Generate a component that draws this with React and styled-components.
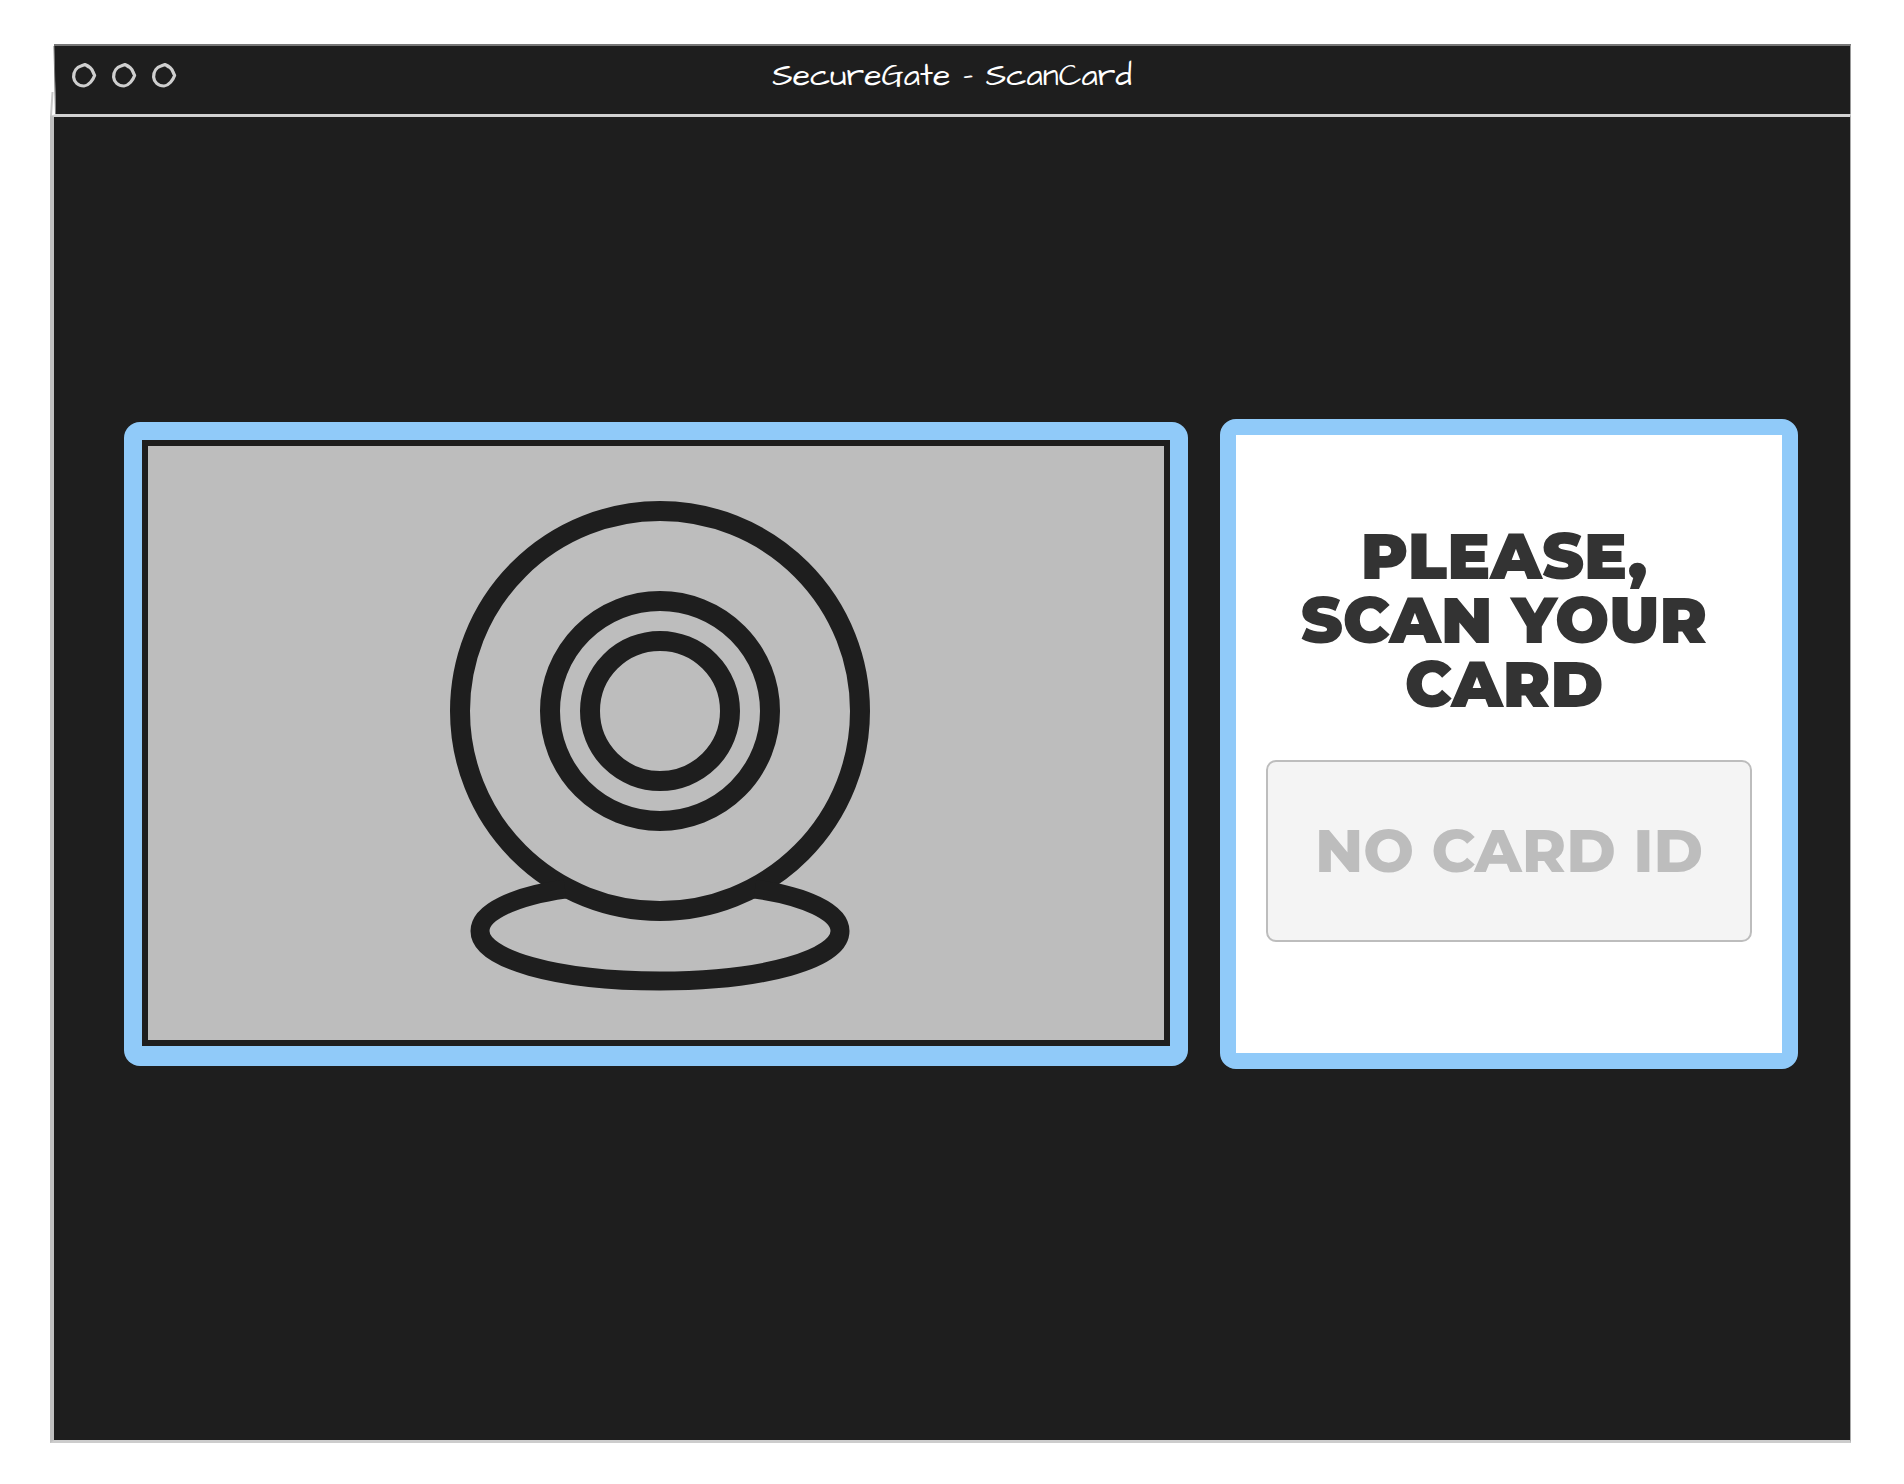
import React from "react";
import styled, { createGlobalStyle } from "styled-components";

const GlobalStyle = createGlobalStyle`
  *, *::before, *::after { box-sizing: border-box; }
  body { margin: 0; background: #fff; }
`;

const Page = styled.div`
  display: flex;
  min-height: 100vh;
  padding: 44px 53px 41px 50px;
`;

const Window = styled.main`
  flex: 1;
  display: flex;
  flex-direction: column;
  min-width: 0;
`;

const TitleBar = styled.header`
  position: relative;
  display: grid;
  grid-template-columns: 1fr auto 1fr;
  align-items: center;
  height: 70px;
  margin-left: 4px;
  padding: 0 18px 8px;
  background: #1e1e1e;
  border-top: 2px solid #777;
  border-right: 1px solid #999;
`;

const SketchEdge = styled.svg`
  position: absolute;
  left: -4px;
  top: 0;
  width: 8px;
  height: 72px;
`;

const Dots = styled.div`
  display: flex;
  gap: 16px;
`;

const Dot = styled.svg`
  width: 24px;
  height: 24px;
  overflow: visible;
  fill: none;
  stroke: #cfcfcf;
  stroke-width: 3.2;
  stroke-linejoin: round;
`;

const Title = styled.h1`
  margin: 0;
  color: #fff;
  font: 400 32px/40px "Architects Daughter", "DejaVu Sans", sans-serif;
  white-space: nowrap;
`;

const Body = styled.section`
  flex: 1;
  display: grid;
  grid-template-columns: 1064fr 578fr;
  gap: 32px;
  align-items: center;
  padding: 0 52px 70px 70px;
  background: #1e1e1e;
  border-style: solid;
  border-width: 3px 1px 3px 4px;
  border-color: #d2d2d2 #aaa #ccc #c0c0c0;
`;

const Camera = styled.figure`
  margin: 0;
  height: 644px;
  padding: 18px 18px 20px;
  background: #90caf9;
  border-radius: 16px;
`;

const Preview = styled.div`
  display: flex;
  align-items: center;
  justify-content: center;
  height: 100%;
  padding: 6px 0 0 8px;
  background: #bdbdbd;
  border: 6px solid #1e1e1e;
`;

const Webcam = styled.svg`
  width: 420px;
  height: 490px;
  fill: none;
  stroke: #1e1e1e;
  stroke-width: 20;
`;

const Panel = styled.form`
  display: flex;
  flex-direction: column;
  justify-content: center;
  gap: 44px;
  height: 650px;
  padding: 0 30px 22px;
  background: #fff;
  border: 16px solid #90caf9;
  border-radius: 16px;
`;

const Prompt = styled.label`
  padding-right: 10px;
  color: #333;
  font: 900 64px/64px Montserrat, Inter, sans-serif;
  text-align: center;
`;

const CardId = styled.input`
  width: 100%;
  height: 182px;
  padding: 0 20px;
  color: #333;
  background: #f4f4f4;
  border: 2px solid #bdbdbd;
  border-radius: 10px;
  font: 800 60px/64px Montserrat, Inter, sans-serif;
  text-align: center;
  &::placeholder { color: #bdbdbd; opacity: 1; }
`;

function SketchDot() {
  return (
    <Dot viewBox="0 0 24 24" aria-hidden="true">
      <path d="M13 0.5 C17 2 20 5 21 8 L22.6 11.5 C21 16 17 21.5 12 22 C6 22 2 18 1.6 13 C1.6 7 5 3 9 2 L13 0.5 L17 3.2" />
    </Dot>
  );
}

export default function App() {
  return (
    <Page>
      <GlobalStyle />
      <Window>
        <TitleBar>
          <SketchEdge viewBox="0 0 8 72" aria-hidden="true">
            <path d="M0 44 L4 0 L6 68 L0 70 Z" fill="#fff" />
            <path d="M4 0 L5.5 68" stroke="#777" strokeWidth="1" />
            <path d="M2.5 46 L1 70" stroke="#c8c8c8" strokeWidth="2" />
          </SketchEdge>
          <Dots>
            <SketchDot />
            <SketchDot />
            <SketchDot />
          </Dots>
          <Title>SecureGate - ScanCard</Title>
        </TitleBar>
        <Body>
          <Camera>
            <Preview>
              <Webcam viewBox="0 0 420 490" role="img" aria-label="Webcam">
                <circle cx="210" cy="210" r="200" />
                <circle cx="210" cy="210" r="110" />
                <circle cx="210" cy="210" r="70" />
                <path d="M115 388 C65 395 30 411 30 430 C30 458 106 480 210 480 C314 480 390 458 390 430 C390 411 355 395 305 388" strokeWidth="19" />
              </Webcam>
            </Preview>
          </Camera>
          <Panel>
            <Prompt htmlFor="card-id">PLEASE,<br />SCAN YOUR<br />CARD</Prompt>
            <CardId id="card-id" placeholder="NO CARD ID" readOnly />
          </Panel>
        </Body>
      </Window>
    </Page>
  );
}
